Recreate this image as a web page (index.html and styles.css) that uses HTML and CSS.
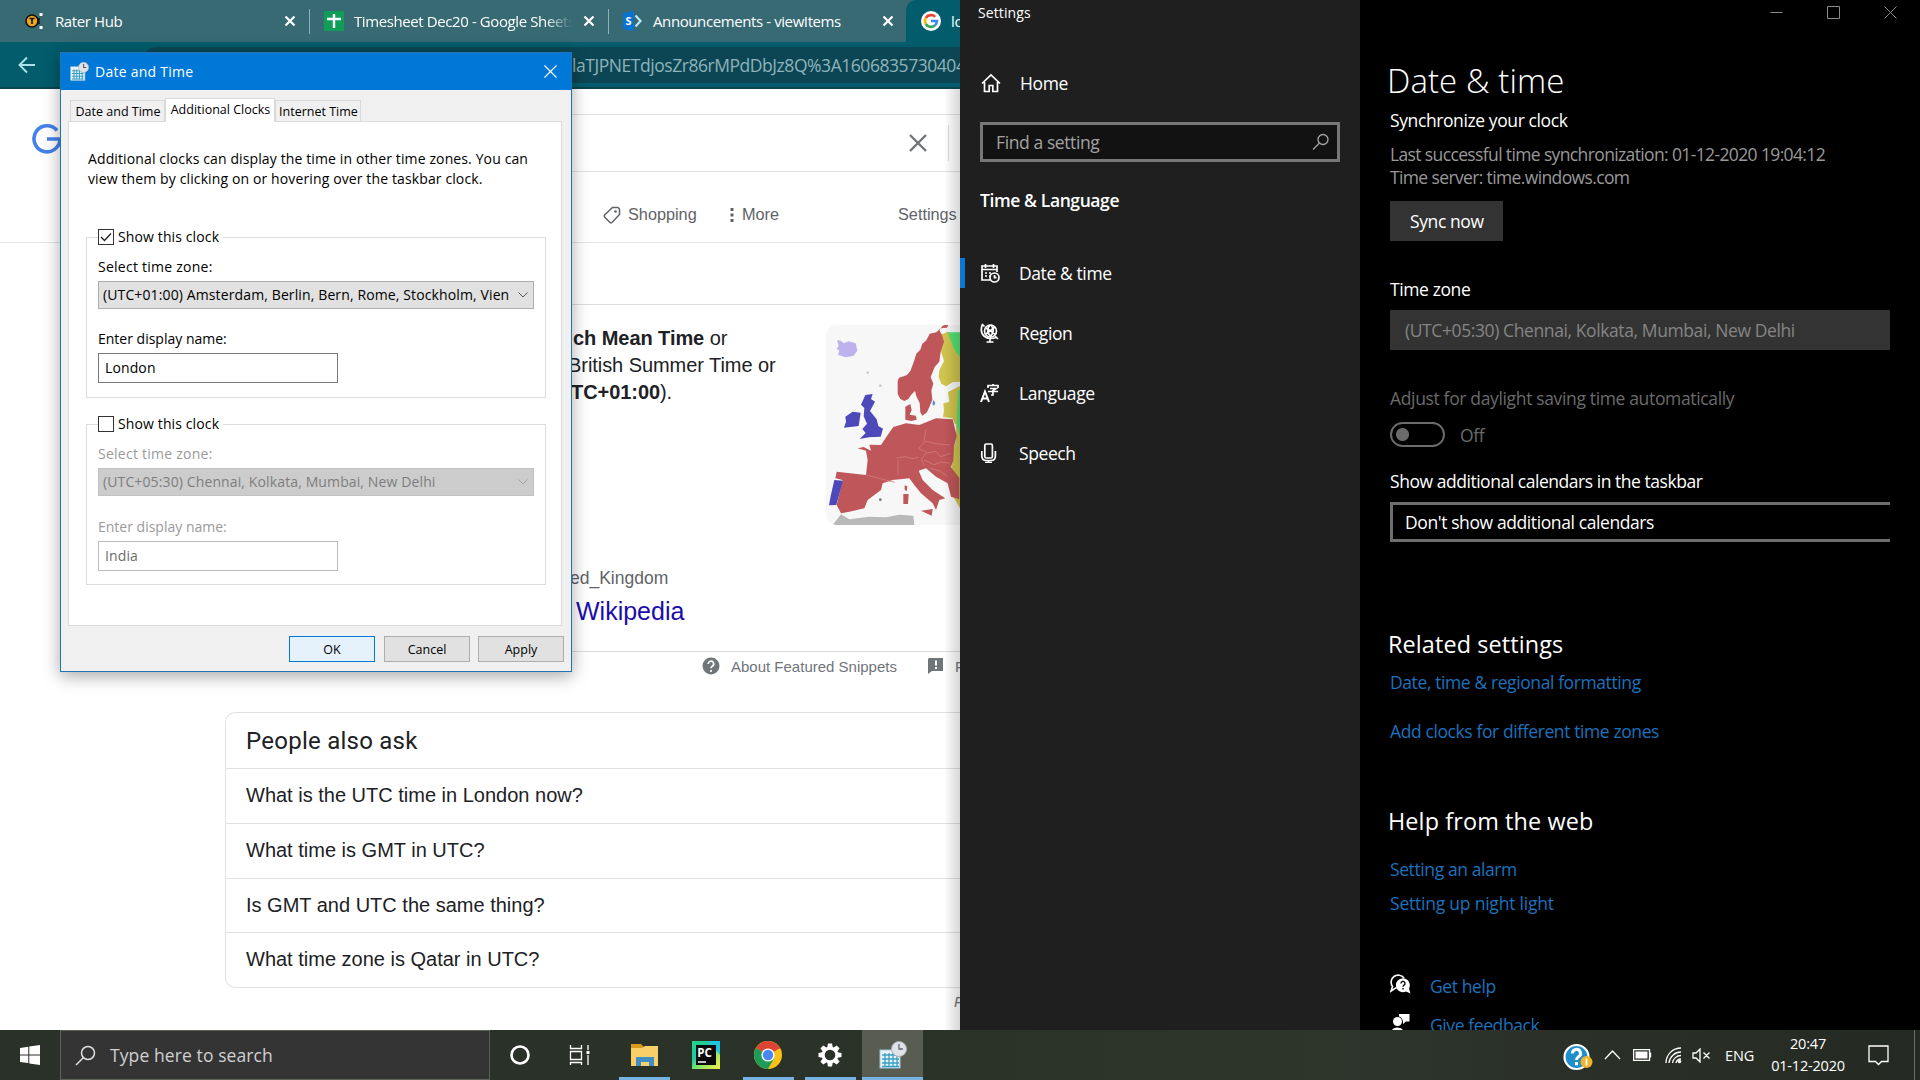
FILE: index.html
```html
<!DOCTYPE html>
<html lang="en">
<head>
<meta charset="utf-8">
<title>Desktop</title>
<link rel="stylesheet" href="styles.css">
</head>
<body>
<div class="desktop">

<section class="browser">
  <div class="tabstrip">
    <div class="tab tab-one">
      <svg class="tab-icon" width="20" height="20" viewBox="0 0 20 20"><circle cx="7" cy="10" r="6" fill="#f2a71b" stroke="#111" stroke-width="1.6"/><path d="M4.5 7.5h5M7 7.5v5.5" stroke="#111" stroke-width="1.6"/><path d="M14.5 2h3v3h-3zM14.5 15h3v3h-3z" fill="#fff"/><path d="M14.500 7l-1 3 1 3" stroke="#111" fill="none" stroke-width="1.5"/></svg>
      <span class="tab-title">Rater Hub</span>
      <svg class="tab-close" width="12" height="12" viewBox="0 0 12 12"><path d="M1.5 1.5l9 9M10.500 1.5l-9 9"/></svg>
    </div>
    <div class="tab tab-two">
      <svg class="tab-icon" width="20" height="20" viewBox="0 0 20 20"><rect width="20" height="20" fill="#109d58"/><path d="M10 3v14M3 8h14" stroke="#fff" stroke-width="2.4"/></svg>
      <span class="tab-title fade">Timesheet Dec20 - Google Sheets</span>
      <svg class="tab-close" width="12" height="12" viewBox="0 0 12 12"><path d="M1.5 1.5l9 9M10.500 1.5l-9 9"/></svg>
    </div>
    <div class="tab tab-three">
      <svg class="tab-icon" width="20" height="20" viewBox="0 0 20 20"><path d="M0 2l11-2v20L0 18z" fill="#0a73cf"/><path d="M12.500 4.500l5 5.500-5 5.500" stroke="#bfe4ff" stroke-width="2.200" fill="none"/><text x="2.500" y="14" class="sp-letter">S</text></svg>
      <span class="tab-title">Announcements - viewItems</span>
      <svg class="tab-close" width="12" height="12" viewBox="0 0 12 12"><path d="M1.5 1.5l9 9M10.500 1.5l-9 9"/></svg>
    </div>
    <div class="tab tab-active">
      <svg width="20" height="20" viewBox="0 0 20 20"><circle cx="10" cy="10" r="10" fill="#fff"/><g fill="none" stroke-width="2.600"><path d="M14.200 5.800A6 6 0 0 0 4.800 7" stroke="#ea4335"/><path d="M4.800 7a6 6 0 0 0 0 6" stroke="#fbbc05"/><path d="M4.800 13a6 6 0 0 0 9 1.500" stroke="#34a853"/><path d="M13.800 14.500A6 6 0 0 0 16 10h-6" stroke="#4285f4"/></g></svg>
      <span class="tab-title">lo</span>
    </div>
  </div>
  <div class="toolbar">
    <svg class="back" width="18" height="18" viewBox="0 0 18 18"><path d="M17 9H2M9 1.500L1.500 9 9 16.500"/></svg>
    <div class="omnibox"><span>laTJPNETdjosZr86rMPdDbJz8Q%3A1606835730404</span></div>
  </div>
  <div class="page">
    <div class="search-head">
      <svg class="g-logo" width="30" height="30" viewBox="0 0 30 30"><path d="M25 6.500A13 13 0 1 0 28 15H15" fill="none" stroke="#4680ea" stroke-width="3.600"/></svg>
      <div class="search-box">
        <svg width="18" height="18" viewBox="0 0 18 18"><path d="M1 1l16 16M17 1L1 17" stroke="#70757a" stroke-width="2.400"/></svg>
        <i></i>
      </div>
    </div>
    <div class="filters">
      <svg width="18" height="18" viewBox="0 0 18 18"><path d="M9.500 1.500h5.500l1.500 1.500v5.500L9 16.500Q8 17.200 7 16.500L1.600 11Q1 10 1.600 9z" fill="none" stroke="#5f6368" stroke-width="1.500"/><circle cx="12.500" cy="5.500" r="1.300" fill="#5f6368"/></svg>
      <span class="f-shop">Shopping</span>
      <svg width="4" height="16" viewBox="0 0 4 16"><path d="M.5 1h3v3h-3zM.5 6.500h3v3h-3zM.5 12h3v3h-3z" fill="#5f6368"/></svg>
      <span class="f-more">More</span>
      <span class="f-set">Settings</span>
    </div>
    <div class="snippet">
      <div class="snippet-body">
        <p><b>ch Mean Time</b> or<br><span class="bst">British Summer Time or</span><br><b class="tc">TC+01:00</b>).</p>
        <svg class="map" width="134" height="200" viewBox="800 75 402 600">
          <rect x="800" y="75" width="402" height="600" fill="#f7f7f7"/>
          <path d="M833 120l12 2 8 8 14-6 22 6 5 22-12 16-24 4-22-8 4-12-8-6 6-8z" fill="#bdb2ec"/>
          <path d="M820 675l25-32 25 15 60-8 50 2 40-8 42 3 3 28z" fill="#b9b9b9"/>
          <path d="M1130 110l35-15 20 8 17 60v82l-22 2-20 12-14-8-8-20 2-20 14-28zM1152 310l18-4-4-30 12-6 24-12v120l-15-5-8-18-28-4 3-20zM1190 375h12v250l-20-35 10-50-20-50 18-70z" fill="#cfc44e"/>
          <path d="M1165 97h37v75l-18-25z M1197 270h5v140l-10-40z" fill="#54e06f"/>
          <path d="M1163 83l-20 2-12 12-20 4-10 20-12 10-6 18-12 12-8 26-10 26-10 12-10 4-14 4-4 10v38l8 16 12 6 12-6 8-12 12-12 4 16 10 20 2 28 6 10 14-10 8-18 8-20-3-28 6-20-8-20 12-30 14-16 4-30 10-30-6-20-8-14 10-14 18-5zM1038 320l15-8 4 18-6 14 19 3 2 12-16 4-18-4zM895 445l18-4 22 11-5-18 35 1 20-30 17-24 38-11 40 5 50-20 50 3 12 50-8 32-2 42-8 18 26 34v64l-25-8-10-40-35-20-30-25-22 7 12 28 30 30 38 25-18 5-10 30-10-20-35-30-20-25-15-20-50 5-30 10-5 20-40 30-10 25-45 10-25 5-13-25 18-75-22-5 4-20 88 10 5-45-5-28zM1085 632l35-5-3 20zM1032 582h16l-2 30h-14zM1036 556l8 3-2 15-6-5z" fill="#bf5659"/>
          <path d="M918 285l22-3-5 15 12 8-15 28 20 25 5 20 14 8-7 24-35 2-28 5 18-18-10-12 14-16-10-22 2-25-10-10zM880 335l24 3-6 40-44 5 6-18-2-15zM825 540l26 2-20 73-22 1 5-28z" fill="#4d49b8"/>
          <path d="M1012 474l26-4 20 6 20-4M1078 445l20-22 30 8 44 4M1078 445l24 12-16 22 10 18M1100 388l-6 34M1100 460l30-6 14 16 30-10M1094 480l30 14 22-8 26 4M1112 505l30 8 22 16M920 525l86 22M1016 480v44" fill="none" stroke="#d17a7b" stroke-width="2.500"/>
          <circle cx="963" cy="599" r="4" fill="#777"/><circle cx="925" cy="218" r="4" fill="#ccc"/><circle cx="963" cy="257" r="4" fill="#ccc"/><path d="M1122 300l6 8-4 10-5-6z" fill="#5a8ad0"/>
        </svg>
      </div>
      <div class="cite">ed_Kingdom</div>
      <div class="result">Wikipedia</div>
    </div>
    <div class="about">
      <svg width="18" height="18" viewBox="0 0 18 18"><circle cx="9" cy="9" r="8.500" fill="#70757a"/><path d="M6.300 7a2.700 2.700 0 1 1 4 2.300q-1.300.8-1.300 2M9 13v2" fill="none" stroke="#fff" stroke-width="1.700"/></svg>
      <span class="about-text">About Featured Snippets</span>
      <svg width="16" height="16" viewBox="0 0 16 16"><path d="M1 0h14v13H4l-4 3V1z" fill="#70757a"/><path d="M8 2.500v5M8 9v2" stroke="#fff" stroke-width="2"/></svg>
      <span>Feedback</span>
    </div>
    <div class="paa">
      <h2>People also ask</h2>
      <div>What is the UTC time in London now?</div>
      <div>What time is GMT in UTC?</div>
      <div>Is GMT and UTC the same thing?</div>
      <div>What time zone is Qatar in UTC?</div>
    </div>
    <em class="foot">Feedback</em>
  </div>
</section>

<section class="settings">
  <aside class="side">
    <div class="app-name">Settings</div>
    <div class="home">
      <svg width="20" height="20" viewBox="0 0 20 20"><path d="M1 10.500L10 2l9 8.500M3.500 9v9.500h4.700v-6h3.600v6h4.700V9"/></svg>
      <span>Home</span>
    </div>
    <div class="find"><span>Find a setting</span>
      <svg width="18" height="18" viewBox="0 0 18 18"><circle cx="11" cy="6.500" r="5"/><path d="M7.500 10L1 16.500"/></svg>
    </div>
    <div class="cat">Time &amp; Language</div>
    <nav>
      <div class="item current">
        <svg width="20" height="20" viewBox="0 0 20 20"><path d="M10 17H2V3h15v6M2 6.500h15M5.500 1v4M13.500 1v4M5 10h2M5 13h2M9 10h2M9 13h1"/><circle cx="14.500" cy="14.500" r="4.500"/><path d="M14.500 12v2.700h2"/></svg>
        <span>Date &amp; time</span></div>
      <div class="item">
        <svg width="20" height="20" viewBox="0 0 20 20"><circle cx="10.500" cy="8" r="6"/><path d="M2.500 1Q-.5 9 4 13t12 1.500M2 1l2.500 2.500M15 13l3 3M10 15v4M6.500 19h7M6 5l9 6M6 11l9-7M10 2q-5 6 1 12M11 2q5 6-1 12"/></svg>
        <span>Region</span></div>
      <div class="item">
        <svg width="20" height="20" viewBox="0 0 20 20"><path d="M1 19L5 8.500 9 19M2.500 15.500h5" stroke-width="2"/><path d="M8 5V2.500h10V5M13 1v2M10 5.500h6l-3 2V12h-2M8 8.500h10" /></svg>
        <span>Language</span></div>
      <div class="item">
        <svg width="20" height="20" viewBox="0 0 20 20"><rect x="4.800" y="1" width="7.600" height="14" rx="1.500"/><path d="M1.800 8v5q0 4.500 4.500 4.500h4.600q4.500 0 4.500-4.500V8M8.600 17.500v2M5 19.500h7"/></svg>
        <span>Speech</span></div>
    </nav>
  </aside>
  <main class="content">
    <div class="win-buttons">
      <svg width="13" height="13" viewBox="0 0 13 13"><path d="M.5 6.500h12"/></svg>
      <svg width="13" height="13" viewBox="0 0 13 13"><path d="M.5.5h12v12H.5z"/></svg>
      <svg width="13" height="13" viewBox="0 0 13 13"><path d="M.5.5l12 12M12.500.5l-12 12"/></svg>
    </div>
    <h1>Date &amp; time</h1>
    <p class="sync">Synchronize your clock</p>
    <p class="status">Last successful time synchronization: 01-12-2020 19:04:12<br>Time server: time.windows.com</p>
    <div class="btn">Sync now</div>
    <p class="lbl-zone">Time zone</p>
    <div class="zone">(UTC+05:30) Chennai, Kolkata, Mumbai, New Delhi</div>
    <p class="lbl-dst">Adjust for daylight saving time automatically</p>
    <div class="dst"><i class="toggle"></i><span>Off</span></div>
    <p class="lbl-cal">Show additional calendars in the taskbar</p>
    <div class="cal">Don't show additional calendars</div>
    <h2 class="related">Related settings</h2>
    <a class="l1">Date, time &amp; regional formatting</a>
    <a class="l2">Add clocks for different time zones</a>
    <h2 class="help">Help from the web</h2>
    <a class="l3">Setting an alarm</a>
    <a class="l4">Setting up night light</a>
    <div class="row r1">
      <svg width="21" height="21" viewBox="0 0 21 21"><path d="M8.500 14H5.500L1 17l1.500-4.500A7 7 0 1 1 14 4" fill="none" stroke="#fff" stroke-width="1.600"/><path d="M13 4.200a7 7 0 0 1 6 10.300l1.500 5-4.500-2a7 7 0 1 1-3-13.300z" fill="#fff"/><path d="M11 9.500a2 2 0 1 1 3 1.600q-1 .6-1 1.700M13 14v1.500" fill="none" stroke="#000" stroke-width="1.400"/></svg>
      <a>Get help</a></div>
    <div class="row r2">
      <svg width="21" height="21" viewBox="0 0 21 21"><circle cx="7.500" cy="8.500" r="4.500" fill="#fff"/><path d="M1 21q0-6.500 6.500-6.500T14 21zM9 1h10.500v7.500H16L13 11V8.500Q12 4 9 3.500z" fill="#fff"/></svg>
      <a>Give feedback</a></div>
  </main>
</section>

<section class="dialog">
  <header>
    <svg width="19" height="19" viewBox="0 0 28 28"><rect x="1" y="7" width="21" height="20" fill="#e8f4fa" stroke="#9cc7dc"/><path d="M3 13h17M3 17h17M3 21h17M3 25h17M6 11v15M10 11v15M14 11v15M18 11v15" stroke="#3a9fc4" stroke-width="1.500"/><circle cx="20" cy="8" r="7.500" fill="#dfe3e8" stroke="#a9afb5"/><path d="M20 3v5h4" stroke="#556" fill="none" stroke-width="1.500"/></svg>
    <span>Date and Time</span>
    <svg class="x" width="13" height="13" viewBox="0 0 13 13"><path d="M.5.5l12 12M12.500.5l-12 12" stroke="#fff" stroke-width="1.200"/></svg>
  </header>
  <div class="dlg-tabs"><span class="t1">Date and Time</span><span class="t2 on">Additional Clocks</span><span class="t3">Internet Time</span></div>
  <div class="panel">
    <p>Additional clocks can display the time in other time zones. You can<br>view them by clicking on or hovering over the taskbar clock.</p>
    <fieldset>
      <legend><svg width="16" height="16" viewBox="0 0 16 16"><rect x=".5" y=".5" width="15" height="15" fill="#fff" stroke="#333"/><path d="M3 8l3.500 3.500L13 4.500" fill="none" stroke="#222" stroke-width="1.300"/></svg><span>Show this clock</span></legend>
      <label class="a">Select time zone:</label>
      <div class="combo"><span>(UTC+01:00) Amsterdam, Berlin, Bern, Rome, Stockholm, Vienna</span><svg width="10" height="6" viewBox="0 0 10 6"><path d="M.5.5L5 5 9.500.5"/></svg></div>
      <label class="b">Enter display name:</label>
      <div class="input">London</div>
    </fieldset>
    <fieldset class="off">
      <legend><svg width="16" height="16" viewBox="0 0 16 16"><rect x=".5" y=".5" width="15" height="15" fill="#fff" stroke="#333"/></svg><span>Show this clock</span></legend>
      <label class="a">Select time zone:</label>
      <div class="combo"><span>(UTC+05:30) Chennai, Kolkata, Mumbai, New Delhi</span><svg width="10" height="6" viewBox="0 0 10 6"><path d="M.5.5L5 5 9.500.5"/></svg></div>
      <label class="b">Enter display name:</label>
      <div class="input">India</div>
    </fieldset>
  </div>
  <footer><div class="ok">OK</div><div>Cancel</div><div>Apply</div></footer>
</section>

<section class="taskbar">
  <div class="start"><svg width="20" height="20" viewBox="0 0 20 20"><path d="M0 3l8.300-1.200v7.600H0zM9.300 1.600L20 0v9.400H9.300zM0 10.400h8.300v7.700L0 17zM9.300 10.400H20V20L9.300 18.400z" fill="#fff"/></svg></div>
  <div class="search"><svg width="21" height="21" viewBox="0 0 21 21"><circle cx="13" cy="8" r="6.500" /><path d="M8.500 12.500L1 20"/></svg><span>Type here to search</span></div>
  <div class="app a-cort"><svg width="22" height="22" viewBox="0 0 22 22"><circle cx="11" cy="11" r="8.500" fill="none" stroke="#fff" stroke-width="2.600"/></svg></div>
  <div class="app a-view"><svg width="22" height="20" viewBox="0 0 22 20"><path d="M1.500 0v3.500h11V0M1.500 6.500h11v8h-11zM1.500 20v-2.500h11V20M19 0v5M19 10v10" fill="none" stroke="#fff" stroke-width="1.300"/><path d="M17.500 6h3v3h-3z" fill="#fff"/></svg></div>
  <div class="app run a-exp"><svg width="28" height="24" viewBox="0 0 28 24"><path d="M0 1h10l3 3h14v6H0z" fill="#d99a1c"/><path d="M0 5h11l3-2h13v20H0z" fill="#f9d067"/><path d="M5 23v-9h18v9h-5v-4h-8v4z" fill="#3d8fc6"/></svg></div>
  <div class="app a-pc"><svg width="28" height="28" viewBox="0 0 28 28"><defs><linearGradient id="pc" x2="1" y2="1"><stop offset="0" stop-color="#1fd789"/><stop offset=".35" stop-color="#20c9a0"/><stop offset=".55" stop-color="#7fe66a"/><stop offset="1" stop-color="#f6ee44"/></linearGradient></defs><rect width="28" height="28" fill="url(#pc)"/><path d="M16 0h12v14z" fill="#1fc4e0"/><rect x="4" y="4" width="20" height="20" fill="#0b0b0b"/><path d="M6 21h8" stroke="#fff" stroke-width="1.500"/><text x="5.200" y="15.500" class="pc-text">PC</text></svg></div>
  <div class="app run a-chr"><svg width="28" height="28" viewBox="0 0 28 28"><circle cx="14" cy="14" r="14" fill="#fbc116"/><path d="M14 14L1.900 7A14 14 0 0 1 26.100 7z" fill="#dd4434"/><path d="M1.900 7A14 14 0 0 0 14 28l6-10.500-6-3.500z" fill="#1d9c57"/><path d="M14 7h12.100" stroke="#dd4434"/><circle cx="14" cy="14" r="6.600" fill="#fff"/><circle cx="14" cy="14" r="5.200" fill="#4a86ef"/></svg></div>
  <div class="app run a-gear"><svg width="24" height="24" viewBox="-12 -12 24 24"><g fill="#fff"><path id="t" d="M-2-11.500h4l1 5h-6z"/><use href="#t" transform="rotate(45)"/><use href="#t" transform="rotate(90)"/><use href="#t" transform="rotate(135)"/><use href="#t" transform="rotate(180)"/><use href="#t" transform="rotate(225)"/><use href="#t" transform="rotate(270)"/><use href="#t" transform="rotate(315)"/></g><circle r="6.800" fill="none" stroke="#fff" stroke-width="3"/></svg></div>
  <div class="app run active a-date"><svg width="28" height="28" viewBox="0 0 28 28"><rect x="1" y="9" width="20" height="18" fill="#e8f4fa" stroke="#9cc7dc"/><path d="M3 14h17M3 18h17M3 22h17M3 25.500h17M6 12v14M10 12v14M14 12v14M18 12v14" stroke="#3a9fc4" stroke-width="1.300"/><circle cx="20" cy="8" r="7.500" fill="#dfe3e8" stroke="#a9afb5"/><path d="M20 3v5h4" stroke="#667" fill="none" stroke-width="1.300"/></svg></div>
  <div class="tray">
    <svg class="q" width="30" height="28" viewBox="0 0 30 28"><circle cx="13.500" cy="14" r="12" fill="#1f8fcb" stroke="#fff" stroke-width="2.200"/><path d="M9.500 10.500a4 4 0 1 1 6 3.300q-2 1.200-2 3.200M13.500 19v3.200" fill="none" stroke="#fff" stroke-width="3"/><circle cx="23.500" cy="19" r="6" fill="#f0b32a"/><path d="M23.500 15.500v7" stroke="#fff" stroke-width="1.800"/></svg>
    <svg class="up" width="17" height="10" viewBox="0 0 17 10"><path d="M1 9l7.500-8L16 9"/></svg>
    <svg class="bat" width="19" height="12" viewBox="0 0 19 12"><path d="M.6.600h15.900v10.800H.6zM17.500 3.500v5"/><path d="M2.500 2.500h12v7h-12z" fill="#fff" stroke="none"/></svg>
    <svg class="wifi" width="17" height="17" viewBox="0 0 17 17"><path d="M1 16A15 15 0 0 1 16 1M4 16A12 12 0 0 1 16 5M7.500 16A8.500 8.500 0 0 1 16 8.500M11 16a5 5 0 0 1 5-4"/><circle cx="14.500" cy="14.500" r="1.800" fill="#fff" stroke="none"/></svg>
    <svg class="vol" width="20" height="15" viewBox="0 0 20 15"><path d="M1 5h3l4-4v13l-4-4H1zM11.500 4.500l6 6M17.500 4.500l-6 6"/></svg>
    <span class="lang">ENG</span>
    <div class="clock">20:47<br>01-12-2020</div>
    <svg class="note" width="21" height="21" viewBox="0 0 21 21"><path d="M1 1h19v15.500h-6.500L10.500 19.500 7.500 16.500H1z"/></svg>
    <i class="peek"></i>
  </div>
</section>

</div>
</body>
</html>
```
FILE: styles.css
```css
* { box-sizing: border-box; }
body { margin: 0; font-family: "Open Sans", "Noto Sans", sans-serif; }
p, h1, h2, fieldset, legend { margin: 0; padding: 0; font-weight: 400; }
svg { flex: none; display: block; }
.desktop { position: relative; width: 1920px; height: 1080px; overflow: hidden; background: #000; }

/* Browser window */
.browser { position: absolute; left: 0; top: 0; width: 960px; height: 1030px; background: #fff; overflow: hidden; font-family: "Liberation Sans", Arial, sans-serif; }
.tabstrip { display: flex; height: 42px; background: #386a74; font-family: "Open Sans", sans-serif; font-size: 15px; letter-spacing: -.4px; color: #fff; }
.tab { display: flex; align-items: center; height: 42px; white-space: nowrap; overflow: hidden; position: relative; flex: none; }
.tab-title { margin-left: 10px; }
.tab-close { margin-left: auto; }
.tab-close path { stroke: #fff; stroke-width: 2.2; }
.tab-one { width: 310px; padding-left: 25px; padding-right: 14px; }
.tab-two { width: 299px; padding-left: 14px; padding-right: 14px; }
.tab-one::after, .tab-two::after { content: ""; position: absolute; right: 0; top: 9px; width: 1px; height: 25px; background: #8fb0b6; }
.tab-three { width: 297px; padding-left: 14px; padding-right: 12px; }
.fade { width: 218px; overflow: hidden; -webkit-mask-image: linear-gradient(90deg, #000 88%, transparent); mask-image: linear-gradient(90deg, #000 88%, transparent); }
.sp-letter { font: 700 11px "Open Sans", sans-serif; fill: #fff; }
.tab-active { width: 54px; padding-left: 15px; background: #025c6b; border-top-left-radius: 10px; }
.toolbar { display: flex; align-items: center; height: 47px; background: #025c6b; border-bottom: 2px solid #0a4450; }
.back { margin-left: 18px; fill: none; stroke: #a9e3ea; stroke-width: 1.9; }
.omnibox { margin-left: 104px; flex: 1; height: 36px; border-radius: 18px 0 0 18px; background: #0c4654; color: #8fb3ba; font: 17.500px/36px "Open Sans", sans-serif; letter-spacing: -.45px; padding-left: 432px; white-space: nowrap; overflow: hidden; }
.page { color: #202124; }
.search-head { display: flex; height: 83px; padding-top: 25px; }
.g-logo { margin: 10px 0 0 32px; }
.search-box { margin-left: 163px; flex: 1; height: 58px; border: 1px solid #dfe1e5; border-right: 0; border-radius: 29px 0 0 29px; display: flex; align-items: center; justify-content: flex-end; }
.search-box i { width: 1px; height: 36px; background: #dadce0; margin: 0 11px 0 21px; }
.filters { display: flex; align-items: center; height: 71px; padding: 15px 0 0 603px; border-bottom: 1px solid #e4e6e9; color: #5f6368; font-size: 16.250px; white-space: nowrap; margin-bottom: 61px; }
.f-shop { margin: 0 35px 0 7px; width: 67px; }
.f-more { margin-left: 8px; width: 38px; }
.f-set { margin-left: 118px; }
.snippet { margin-left: 225px; border-top: 1px solid #dadce0; border-bottom: 1px solid #dadce0; height: 348px; padding-left: 346px; }
.snippet-body { display: flex; height: 220px; padding-top: 20px; justify-content: space-between; }
.snippet-body p { font-size: 20px; line-height: 27px; padding: 0 0 0 2px; letter-spacing: -.06px; white-space: nowrap; }
.bst { margin-left: -5px; }
.tc { margin-left: -2px; }
.map { border-radius: 10px 0 0 10px; }
.cite { margin: 42px 0 0 -1px; height: 22px; line-height: 22px; font-size: 17.500px; color: #5f6368; }
.result { margin: 7px 0 0 5px; font-size: 25px; line-height: 30px; color: #1a0dab; }
.about { display: flex; align-items: center; height: 30px; padding: 0 0 2px 702px; font-size: 15px; color: #70757a; }
.about-text { margin: 0 31px 0 11px; white-space: nowrap; }
.about span:last-child { margin-left: 11px; }
.paa { margin: 30px 0 0 225px; height: 276px; border: 1px solid #dfe1e5; border-right: 0; border-radius: 10px 0 0 10px; }
.paa h2 { padding-left: 20px; height: 55px; font: 24px/57px Roboto, sans-serif; letter-spacing: .25px; }
.paa div { padding-left: 20px; height: 54.750px; border-top: 1px solid #dfe1e5; font-size: 20px; line-height: 53px; }
.foot { display: block; margin: 4px 0 0 954px; color: #70757a; font-size: 15px; line-height: 20px; }
.browser::after { content: ""; position: absolute; right: 0; top: 89px; bottom: 0; width: 16px; background: linear-gradient(90deg, transparent, rgba(0,0,0,.16)); }

/* Settings window */
.settings { position: absolute; left: 960px; top: 0; width: 960px; height: 1030px; display: flex; overflow: hidden; color: #fff; font-size: 17.500px; line-height: 24px; letter-spacing: -.4px; white-space: nowrap; }
.side { width: 400px; background: #1f1f1f; }
.app-name { padding-left: 18px; font-size: 14px; line-height: 25px; height: 69px; letter-spacing: .1px; }
.side svg { fill: none; stroke: #fff; stroke-width: 1.7; }
.home { display: flex; align-items: center; height: 28px; padding-left: 21px; gap: 19px; }
.find { margin: 25px 0 0 20px; width: 360px; height: 40px; border: 3px solid #767676; background: #121212; color: #a2a2a2; display: flex; align-items: center; justify-content: space-between; padding: 0 7px 0 13px; }
.find svg { stroke: #a6a6a6; stroke-width: 1.3; }
.cat { margin: 26px 0 0 20px; font-weight: 600; height: 24px; }
nav { margin-top: 31px; }
.item { display: flex; align-items: center; height: 60px; padding-left: 20px; gap: 19px; }
.current { background: linear-gradient(#0a78d4, #0a78d4) 0 50% / 5px 30px no-repeat; }
.content { width: 560px; background: #000; padding-left: 30px; display: flex; flex-direction: column; align-items: flex-start; }
.content > * { flex: none; }
.win-buttons { display: flex; gap: 44px; height: 59px; padding-top: 6px; margin-left: 380px; }
.win-buttons svg { fill: none; stroke: #8a8a8a; stroke-width: 1; }
h1 { font-size: 33px; line-height: 44px; height: 44px; font-weight: 350; letter-spacing: .1px; margin-left: -3px; }
.sync { margin-top: 5px; }
.status { margin-top: 11px; line-height: 23px; color: #999; letter-spacing: -.63px; }
.btn { margin-top: 12px; width: 113px; height: 40px; line-height: 41px; background: #333; padding-left: 20px; }
.lbl-zone { margin-top: 36px; }
.zone { margin-top: 9px; width: 500px; height: 40px; line-height: 40px; padding-left: 15px; background: #333; color: #858585; }
.lbl-dst { margin-top: 36px; color: #6b6b6b; letter-spacing: -.35px; }
.dst { margin-top: 12px; display: flex; align-items: center; gap: 15px; height: 25px; color: #6b6b6b; }
.toggle { width: 55px; height: 25px; border: 2px solid #6b6b6b; border-radius: 13px; background: radial-gradient(circle at 10.500px 10.500px, #6b6b6b 6px, transparent 7px); }
.lbl-cal { margin-top: 22px; letter-spacing: -.46px; }
.cal { margin-top: 9px; width: 500px; height: 40px; line-height: 34px; border: 3px solid #6e6e6e; border-right: 0; padding-left: 12px; }
.content h2 { font-size: 23.400px; line-height: 32px; margin-left: -2px; letter-spacing: .12px; }
.content .related { margin-top: 86px; }
.content .help { margin-top: 62px; }
a { color: #1c72bd; }
.l1 { margin-top: 10px; }
.l2 { margin-top: 25px; }
.l3 { margin-top: 20px; }
.l4 { margin-top: 10px; letter-spacing: -.22px; }
.row { display: flex; gap: 19px; height: 24px; }
.r1 { margin-top: 59px; }
.r2 { margin-top: 15px; }

/* Date and Time dialog */
.dialog { position: absolute; left: 60px; top: 52px; width: 512px; height: 620px; border: 1px solid #2275b5; background: #f0f0f0; color: #000; font-size: 14px; line-height: 20px; letter-spacing: .12px; box-shadow: 0 4px 16px rgba(0,0,0,.35); white-space: nowrap; }
.dialog header { display: flex; align-items: center; height: 37px; background: #0078d7; color: #fff; padding: 0 14px 0 9px; }
.dialog header span { margin-left: 6px; letter-spacing: .25px; }
.x { margin-left: auto; }
.dlg-tabs { display: flex; align-items: flex-end; height: 31px; padding-left: 9px; font-size: 12.500px; letter-spacing: 0; }
.dlg-tabs span { height: 21px; border: 1px solid #d9d9d9; border-bottom: 0; text-align: center; line-height: 21px; padding-left: 1px; }
.dlg-tabs .t1 { width: 95px; }
.dlg-tabs .t3 { width: 86px; }
.dlg-tabs .t2 { width: 110px; height: 24px; background: #fff; position: relative; margin-bottom: -1px; }
.panel { margin-left: 7px; width: 494px; height: 505px; background: #fff; border: 1px solid #dcdcdc; padding: 27px 15px 0 17px; }
.panel p { padding-left: 2px; height: 78px; }
fieldset { border: 1px solid #dcdcdc; height: 171px; padding: 0 11px; width: 460px; margin-bottom: 16px; min-width: 0; }
legend { display: flex; align-items: center; height: 20px; padding-right: 4px; }
legend span { margin-left: 4px; }
label { display: block; height: 20px; }
.a { margin: 10px 0 4px; letter-spacing: .25px; }
.b { margin: 20px 0 4px; letter-spacing: 0; }
.combo { width: 436px; height: 28px; border: 1px solid #adadad; background: #e1e1e1; display: flex; align-items: center; justify-content: space-between; padding: 0 5px 0 4px; }
.combo span { width: 406px; overflow: hidden; }
.combo svg { fill: none; stroke: #555; }
.input { width: 240px; height: 30px; line-height: 27px; border: 1px solid #7a7a7a; padding-left: 6px; background: #fff; }
.off label { color: #9a9a9a; }
.off .combo { background: #ccc; border-color: #c3c3c3; color: #7e7e7e; }
.off .combo svg { stroke: #a5a5a5; }
.off .b { margin-top: 21px; }
.off .input { color: #6d6d6d; border-color: #bbb; }
.dialog footer { display: flex; justify-content: flex-end; gap: 8px; padding: 10px 7px 0 0; font-size: 12.500px; letter-spacing: 0; }
.dialog footer div { width: 86px; height: 26px; line-height: 26px; text-align: center; border: 1px solid #adadad; background: #e1e1e1; }
.dialog footer .ok { border-color: #0078d7; background: #e5f1fb; margin-right: 1px; }

/* Taskbar */
.taskbar { position: absolute; left: 0; top: 1030px; width: 1920px; height: 50px; display: flex; background: linear-gradient(90deg, #2a3128, #2b3228 50%, #2e352b 70%, #252923); color: #fff; white-space: nowrap; }
.start { width: 60px; padding: 15px 0 0 20px; }
.search { width: 430px; display: flex; align-items: center; background: #343434; border: 1px solid #5c645a; font-size: 17.500px; letter-spacing: .1px; color: #d0d0d0; padding-left: 14px; }
.search svg { fill: none; stroke: #e0e0e0; stroke-width: 1.5; }
.search span { margin-left: 14px; }
.app { display: flex; align-items: center; justify-content: center; }
.run { border-bottom: 3px solid #76b3e2; padding-top: 3px; }
.a-cort { width: 60px; }
.a-view { width: 60px; margin-right: 9px; }
.a-exp { width: 51px; }
.a-pc { width: 51px; margin: 0 12px 0 10px; }
.a-chr { width: 51px; margin-right: 11px; }
.a-chr svg, .a-gear svg { margin-right: 2px; }
.a-gear { width: 51px; margin-right: 6px; }
.a-date { width: 61px; background: #595d51; }
.pc-text { font: 700 11.500px "Open Sans", sans-serif; fill: #fff; }
.tray { display: flex; align-items: center; margin-left: auto; }
.tray svg { fill: none; stroke: #fff; stroke-width: 1.3; }
.tray .q { margin: 4px 11px 0 0; stroke: none; }
.up { margin-right: 12px; }
.bat { margin-right: 13px; }
.wifi { margin-right: 10px; }
.vol { margin-right: 13px; }
.lang { font-size: 14.500px; letter-spacing: -.1px; width: 30px; }
.clock { font-size: 14.500px; letter-spacing: -.2px; line-height: 22px; width: 78px; text-align: center; margin: 0 21px 0 14px; }
.note { margin-right: 25px; }
.peek { width: 6px; height: 50px; border-left: 1px solid #6a6e68; }
```
